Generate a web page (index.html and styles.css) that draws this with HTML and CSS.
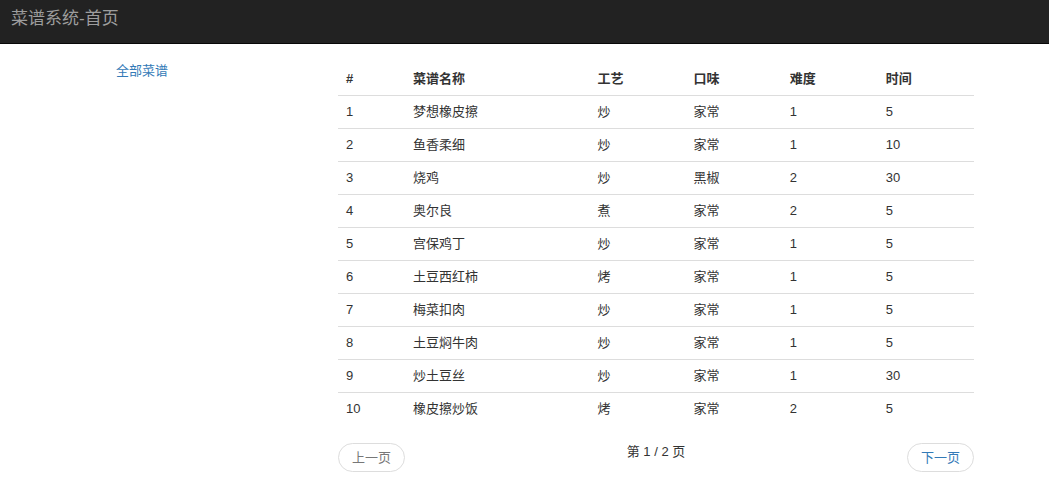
FILE: index.html
```html
<!DOCTYPE html>
<html lang="zh-CN">
<head>
<meta charset="utf-8">
<title>菜谱系统-首页</title>
<link rel="stylesheet" href="styles.css">
</head>
<body>
<nav class="navbar">
  <span class="brand">菜谱系统-首页</span>
</nav>
<div class="main">
  <aside class="sidebar">
    <a class="side-link" href="#">全部菜谱</a>
  </aside>
  <section class="content">
    <table class="recipes">
      <colgroup>
        <col class="c-id"><col class="c-name"><col class="c-w"><col class="c-w"><col class="c-w"><col class="c-w">
      </colgroup>
      <thead>
        <tr><th>#</th><th>菜谱名称</th><th>工艺</th><th>口味</th><th>难度</th><th>时间</th></tr>
      </thead>
      <tbody>
        <tr><td>1</td><td>梦想橡皮擦</td><td>炒</td><td>家常</td><td>1</td><td>5</td></tr>
        <tr><td>2</td><td>鱼香柔细</td><td>炒</td><td>家常</td><td>1</td><td>10</td></tr>
        <tr><td>3</td><td>烧鸡</td><td>炒</td><td>黑椒</td><td>2</td><td>30</td></tr>
        <tr><td>4</td><td>奥尔良</td><td>煮</td><td>家常</td><td>2</td><td>5</td></tr>
        <tr><td>5</td><td>宫保鸡丁</td><td>炒</td><td>家常</td><td>1</td><td>5</td></tr>
        <tr><td>6</td><td>土豆西红柿</td><td>烤</td><td>家常</td><td>1</td><td>5</td></tr>
        <tr><td>7</td><td>梅菜扣肉</td><td>炒</td><td>家常</td><td>1</td><td>5</td></tr>
        <tr><td>8</td><td>土豆焖牛肉</td><td>炒</td><td>家常</td><td>1</td><td>5</td></tr>
        <tr><td>9</td><td>炒土豆丝</td><td>炒</td><td>家常</td><td>1</td><td>30</td></tr>
        <tr><td>10</td><td>橡皮擦炒饭</td><td>烤</td><td>家常</td><td>2</td><td>5</td></tr>
      </tbody>
    </table>
    <div class="pager">
      <span class="pager-btn disabled">上一页</span>
      <span class="pager-info">第 1 / 2 页</span>
      <a class="pager-btn" href="#">下一页</a>
    </div>
  </section>
</div>
</body>
</html>
```
FILE: styles.css
```css
* { box-sizing: border-box; }
html, body {
  margin: 0;
  padding: 0;
  background: #fff;
}
body {
  font-family: "Liberation Sans", "Noto Sans CJK SC", sans-serif;
  font-size: 13px;
  line-height: 16px;
  color: #333;
}
a { text-decoration: none; }

.navbar {
  height: 44px;
  background: #222;
  border-bottom: 1px solid #080808;
  padding: 8px 0 0 11px;
}
.brand {
  display: block;
  font-size: 17px;
  line-height: 22px;
  color: #9d9d9d;
}

.main {
  display: flex;
}
.sidebar {
  width: 338px;
  padding: 19px 0 0 116px;
}
.side-link {
  color: #337ab7;
  line-height: 16px;
}
.content {
  width: 636px;
  padding-top: 19px;
}

.recipes {
  width: 636px;
  table-layout: fixed;
  border-collapse: collapse;
}
.c-id { width: 67px; }
.c-name { width: 184px; }
.c-w { width: 96px; }
.recipes th,
.recipes td {
  padding: 8px;
  text-align: left;
  line-height: 16px;
  white-space: nowrap;
}
.recipes th {
  font-weight: bold;
  border-bottom: 1px solid #ddd;
}
.recipes tbody tr + tr td {
  border-top: 1px solid #ddd;
}

.pager {
  margin-top: 18px;
  display: flex;
  justify-content: space-between;
  align-items: flex-start;
}
.pager-btn {
  display: inline-block;
  padding: 5px 13px;
  line-height: 17px;
  border: 1px solid #ddd;
  border-radius: 15px;
  background: #fff;
  color: #337ab7;
}
.pager-btn.disabled {
  color: #777;
}
.pager-info {
  line-height: 17px;
}
```
